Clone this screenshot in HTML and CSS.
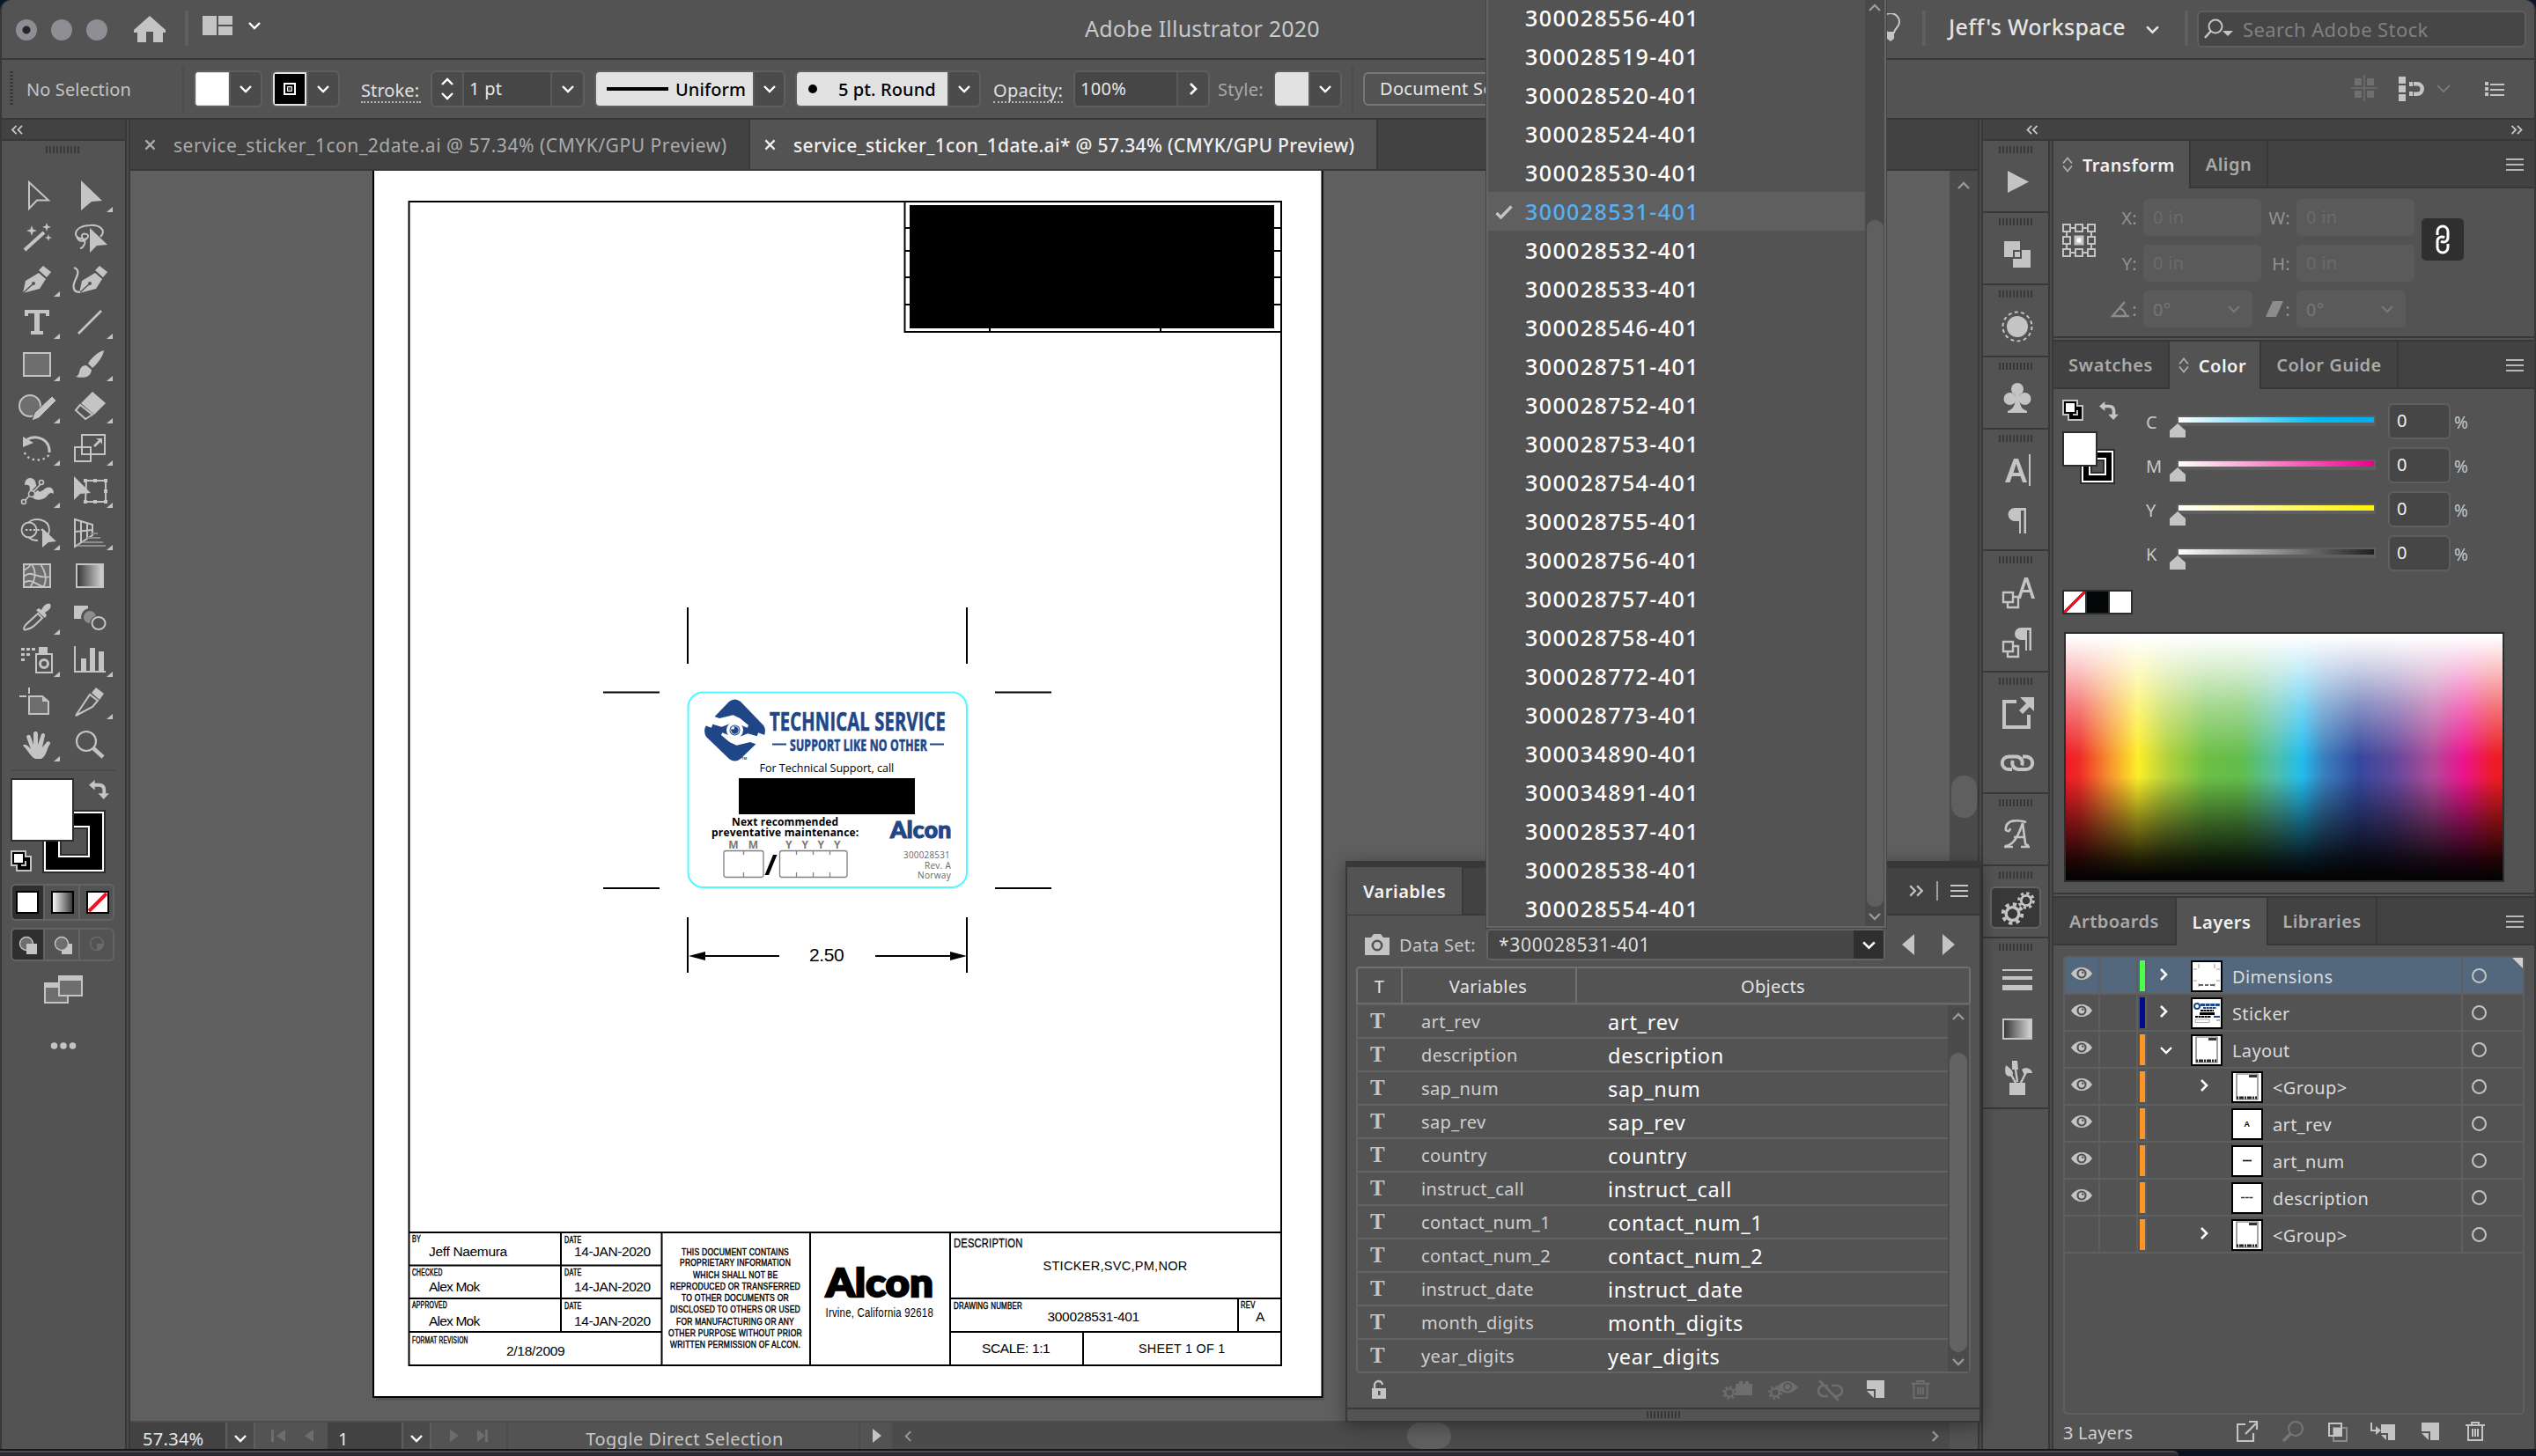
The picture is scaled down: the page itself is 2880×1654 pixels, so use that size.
FILE: index.html
```html
<!DOCTYPE html>
<html lang="en">
<head>
<meta charset="utf-8">
<title>Adobe Illustrator 2020</title>
<link rel="stylesheet" href="styles.css">
</head>
<body>
<svg class="defs" width="0" height="0">
  <symbol id="chev" viewBox="0 0 16 10"><path d="M2 2l6 6 6-6" fill="none" stroke="currentColor" stroke-width="2.4"/></symbol>
  <symbol id="chev-up" viewBox="0 0 16 10"><path d="M2 8l6-6 6 6" fill="none" stroke="currentColor" stroke-width="2.4"/></symbol>
  <symbol id="chev-r" viewBox="0 0 10 16"><path d="M2 2l6 6-6 6" fill="none" stroke="currentColor" stroke-width="2.6"/></symbol>
  <symbol id="chev-l" viewBox="0 0 10 16"><path d="M8 2l-6 6 6 6" fill="none" stroke="currentColor" stroke-width="2.2"/></symbol>
  <symbol id="dbl-l" viewBox="0 0 16 12"><path d="M7 1L2 6l5 5M14 1L9 6l5 5" fill="none" stroke="currentColor" stroke-width="2"/></symbol>
  <symbol id="dbl-r" viewBox="0 0 16 12"><path d="M2 1l5 5-5 5M9 1l5 5-5 5" fill="none" stroke="currentColor" stroke-width="2"/></symbol>
  <symbol id="burger" viewBox="0 0 20 16"><path d="M0 2h20M0 8h20M0 14h20" stroke="currentColor" stroke-width="2"/></symbol>
  <symbol id="updown" viewBox="0 0 12 18"><path d="M1 7.500l5-6 5 6M1 10.500l5 6 5-6" fill="none" stroke="currentColor" stroke-width="1.800"/></symbol>
  <symbol id="cross" viewBox="0 0 14 14"><path d="M1.500 1.500l11 11M12.500 1.500l-11 11" stroke="currentColor" stroke-width="2.400"/></symbol>
  <symbol id="eye" viewBox="0 0 24 14"><path d="M0 7C4 1.500 8 0 12 0s8 1.500 12 7c-4 5.500-8 7-12 7S4 12.500 0 7z" fill="currentColor"/><circle cx="12" cy="7" r="5.600" fill="#535353"/><circle cx="12" cy="7" r="3.400" fill="currentColor"/><circle cx="13.200" cy="5.800" r="1.200" fill="#535353"/></symbol>
  <symbol id="defcol" viewBox="0 0 24 24"><path d="M0 0h18v6h6v18H6v-6H0z" fill="#c4c4c4"/><path d="M8 8h14v14H8z" fill="#000"/><path d="M12 12h6v6h-6z" fill="#c4c4c4"/><path d="M2 2h14v14H2z" fill="#000"/><path d="M4 4h10v10H4z" fill="#fff"/></symbol>
  <symbol id="swap" viewBox="0 0 24 24"><path d="M6 6h6q6 0 6 6v5" fill="none" stroke="#c4c4c4" stroke-width="4"/><path d="M0 6l7-6v12zM11 16h13l-6.500 7z" fill="#c4c4c4"/></symbol>
  <symbol id="trash" viewBox="0 0 22 24"><path d="M0 5h22M7 5V2h8v3M3 6v16h16V6M8 9v9M11 9v9M14 9v9" fill="none" stroke="currentColor" stroke-width="2"/></symbol>
  <symbol id="newdoc" viewBox="0 0 20 20"><path d="M0 0h20v20H10V10H0z" fill="currentColor"/><path d="M0 12h8v8z" fill="currentColor"/></symbol>
  <symbol id="gear" viewBox="0 0 24 24"><circle cx="12" cy="12" r="6.800" fill="none" stroke="currentColor" stroke-width="3.200"/><circle cx="12" cy="12" r="10" fill="none" stroke="currentColor" stroke-width="3.600" stroke-dasharray="3.927 3.927"/></symbol>
  <symbol id="page-thumb" viewBox="0 0 32 32"><path d="M4 1h24v29H4z" fill="none" stroke="#666" stroke-width="1.200"/><path d="M18 2h9v3h-9z" fill="#333"/><path d="M4 28h23" stroke="#222" stroke-width="3" stroke-dasharray="2 1 5 1"/></symbol>
  <linearGradient id="gradgray"><stop offset="0" stop-color="#333"/><stop offset="1" stop-color="#d8d8d8"/></linearGradient>
</svg>
<div class="app">
  <header class="topbar">
    <span class="dot first"></span><span class="dot"></span><span class="dot"></span>
    <svg class="home" width="36" height="30" viewBox="0 0 36 30"><path d="M18 0l18 16v3h-3v11H22V18h-8v12H4V19H0v-3z" fill="#c4c4c4"/></svg>
    <i class="vsep"></i>
    <svg class="arrange" width="34" height="22" viewBox="0 0 34 22"><path d="M0 0h16v22H0zM18 0h16v10H18zM18 12h16v10H18z" fill="#c4c4c4"/></svg>
    <svg class="ch-top" width="16" height="10"><use href="#chev"/></svg>
    <h1>Adobe Illustrator 2020</h1>
    <svg class="bulb" width="24" height="34" viewBox="0 0 24 34"><path d="M8 22c0-4-6-6-6-12a10 10 0 0 1 20 0c0 6-6 8-6 12z" fill="none" stroke="#c4c4c4" stroke-width="2"/><path d="M8 22h8v7l-4 3-4-3z" fill="#c4c4c4"/></svg>
    <i class="vsep"></i>
    <strong class="wsname">Jeff's Workspace</strong>
    <svg class="ch-ws" width="17" height="11"><use href="#chev"/></svg>
    <i class="vsep ws2"></i>
    <div class="search"><svg width="34" height="24" viewBox="0 0 34 24"><circle cx="13" cy="9" r="7.500" fill="none" stroke="#c4c4c4" stroke-width="2"/><path d="M8 14L1 22" stroke="#c4c4c4" stroke-width="2.600"/><path d="M21 14h12l-6 6z" fill="#c4c4c4"/></svg><span>Search Adobe Stock</span></div>
  </header>

  <div class="control">
    <i class="dotgrip"></i>
    <span class="nosel">No Selection</span>
    <i class="thin"></i>
    <div class="box b-fill"><b class="sw white"></b><span class="btn"><svg width="16" height="10"><use href="#chev"/></svg></span></div>
    <div class="box b-stroke"><b class="sw black"><svg width="14" height="14" viewBox="0 0 14 14"><path d="M1 1h12v12H1z" fill="none" stroke="#fff" stroke-width="2"/><path d="M4.500 4.500h5v5h-5z" fill="#535353" stroke="#fff"/></svg></b><span class="btn"><svg width="16" height="10"><use href="#chev"/></svg></span></div>
    <span class="lbl under l-stroke">Stroke:</span>
    <div class="box b-weight"><span class="step"><svg width="16" height="10"><use href="#chev-up"/></svg><svg width="16" height="10"><use href="#chev"/></svg></span><span class="field">1 pt</span><span class="btn"><svg width="16" height="10"><use href="#chev"/></svg></span></div>
    <div class="box b-uni"><span class="light"><i class="line"></i>Uniform</span><span class="btn"><svg width="16" height="10"><use href="#chev"/></svg></span></div>
    <div class="box b-brush"><span class="light"><i class="rnd"></i>5 pt. Round</span><span class="btn"><svg width="16" height="10"><use href="#chev"/></svg></span></div>
    <span class="lbl under l-op">Opacity:</span>
    <div class="box b-op"><span class="field">100%</span><span class="btn"><svg width="10" height="16"><use href="#chev-r"/></svg></span></div>
    <span class="lbl dim l-style">Style:</span>
    <div class="box b-style"><b class="sw gray"></b><span class="btn"><svg width="16" height="10"><use href="#chev"/></svg></span></div>
    <i class="thin t2"></i>
    <div class="docsetup">Document Setup</div>
    <svg class="ctl-icons" width="176" height="32" viewBox="0 0 176 32"><g fill="#6f6f6f"><path d="M4 4h8v8H4zM18 4h8v8h-8zM4 18h8v8H4zM18 18h8v8h-8zM14.200 0h1.600v30h-1.600zM0 14.200h30v1.600H0z"/></g><g fill="#c4c4c4"><path d="M54 2h8v8h-8zM54 12h8v8h-8zM54 22h8v8h-8z"/><path d="M66 8h4v5h-4zM66 19h4v5h-4zM71 8h4a8 8 0 0 1 0 16h-4v-4.500h4a3.500 3.500 0 0 0 0-7h-4z"/></g><path d="M98 12l7 7 7-7" fill="none" stroke="#777" stroke-width="2"/><g fill="#c4c4c4"><path d="M152 8h4v4h-4zM152 14h4v4h-4zM152 20h4v4h-4zM158 10h16v2h-16zM158 16h16v2h-16zM158 22h16v2h-16z"/></g></svg>
  </div>

  <div class="main">
    <aside class="toolbar">
      <div class="strip"><svg width="15" height="11"><use href="#dbl-l"/></svg></div>
      <i class="grip"></i>
      <div class="tools">
        <svg viewBox="0 0 60 48"><path d="M21 9v30l9-9.500h13z" fill="none" stroke="#c4c4c4" stroke-width="2"/></svg>
        <svg viewBox="0 0 60 48"><path d="M20 7v34l12-10 12-1z" fill="#c4c4c4"/><path d="M56 37v6h-7z" fill="#c4c4c4"/></svg>
        <svg viewBox="0 0 60 48"><path d="M16 38l22-20" stroke="#c4c4c4" stroke-width="4"/><path d="M24 10l1.500 4.500L30 16l-4.500 1.500L24 22l-1.500-4.500L18 16l4.500-1.500zM41 7l1.200 3.500L46 12l-3.800 1.300L41 17l-1.200-3.700L36 12l3.800-1.500zM43 20l1 3 3 1-3 1-1 3-1-3-3-1 3-1z" fill="#c4c4c4"/></svg>
        <svg viewBox="0 0 60 48"><path d="M42 23c8-8-2-14-12-13-9 0-16 4-16 10 0 5 12 8 14 3 1-4-8-5-7 0 1 4 6 5 2 10-1 3-4 3-4 3M15 22c2 8 8 6 11 4" fill="none" stroke="#c4c4c4" stroke-width="2"/><path d="M30 13v28l8-8 12-1z" fill="#c4c4c4"/></svg>
        <svg viewBox="0 0 60 48"><path d="M14 39l3-14 15-9 8 7-7 11z" fill="#c4c4c4"/><path d="M14 39l11-10" stroke="#535353" stroke-width="1.500"/><circle cx="26" cy="28" r="2" fill="#535353"/><path d="M32 13l5-5 9 7-5 6z" fill="#c4c4c4"/><path d="M56 37v6h-7z" fill="#c4c4c4"/></svg>
        <svg viewBox="0 0 60 48"><path d="M18 39l3-14 15-9 8 7-7 11z" fill="#c4c4c4"/><path d="M18 39l11-10" stroke="#535353" stroke-width="1.500"/><circle cx="30" cy="28" r="2" fill="#535353"/><path d="M36 13l5-5 9 7-5 6z" fill="#c4c4c4"/><path d="M12 10c6 2 5 7 2 13s-5 15 5 15" fill="none" stroke="#c4c4c4" stroke-width="2.200"/></svg>
        <svg viewBox="0 0 60 48"><path d="M16 10h28v7h-4v-3h-7v20h4v4H23v-4h4V14h-7v3h-4z" fill="#c4c4c4"/><path d="M56 37v6h-7z" fill="#c4c4c4"/></svg>
        <svg viewBox="0 0 60 48"><path d="M17 37l26-26" stroke="#c4c4c4" stroke-width="2.600"/><path d="M56 37v6h-7z" fill="#c4c4c4"/></svg>
        <svg viewBox="0 0 60 48"><path d="M15 11h30v26H15z" fill="#6e6e6e" stroke="#c4c4c4" stroke-width="2"/><path d="M56 37v6h-7z" fill="#c4c4c4"/></svg>
        <svg viewBox="0 0 60 48"><path d="M46 8c-6 1-15 9-18 15l5 5c6-5 12-13 13-20zM26 25c-6 0-7 4-8 8-1 3-2 4-4 5 9 2 17 1 18-8z" fill="#c4c4c4"/><path d="M56 37v6h-7z" fill="#c4c4c4"/></svg>
        <svg viewBox="0 0 60 48"><ellipse cx="22" cy="23" rx="12" ry="12" fill="#6e6e6e" stroke="#c4c4c4" stroke-width="2"/><path d="M24 40l3-9 20-19 5 5-20 20z" fill="#c4c4c4" stroke="#535353"/><path d="M56 37v6h-7z" fill="#c4c4c4"/></svg>
        <svg viewBox="0 0 60 48"><path d="M33 7l15 13-13 13-15-13z" fill="#c4c4c4"/><path d="M19 22l-5 6 11 10 8-5z" fill="none" stroke="#c4c4c4" stroke-width="2"/><path d="M56 37v6h-7z" fill="#c4c4c4"/></svg>
        <svg viewBox="0 0 60 48"><path d="M19 13c12-6 26 1 25 15" fill="none" stroke="#c4c4c4" stroke-width="3"/><path d="M14 10v12l12-5z" fill="#c4c4c4"/><path d="M16 28c3 10 22 12 28 2" fill="none" stroke="#c4c4c4" stroke-width="2.400" stroke-dasharray="2.500 3.500"/><path d="M56 37v6h-7z" fill="#c4c4c4"/></svg>
        <svg viewBox="0 0 60 48"><path d="M21 8h26v22H21zM13 22h18v16H13z" fill="none" stroke="#c4c4c4" stroke-width="2"/><path d="M34 20l6-6-3-2h7v7l-2-3-6 6z" fill="#c4c4c4"/><path d="M56 37v6h-7z" fill="#c4c4c4"/></svg>
        <svg viewBox="0 0 60 48"><path d="M16 17c0-10 10-10 12-4 3 9 2 15 10 9 6-5 11-2 11 5-3-2-5-1-8 3-6 6-17 5-19-4-1-6 2-10-6-9z" fill="#c4c4c4"/><path d="M15 36l20-21" stroke="#535353" stroke-width="4"/><path d="M15 36l20-21" stroke="#c4c4c4" stroke-width="1.800"/><circle cx="15" cy="36" r="2.500" fill="#535353" stroke="#c4c4c4" stroke-width="1.600"/><circle cx="35" cy="14" r="2.500" fill="#535353" stroke="#c4c4c4" stroke-width="1.600"/><circle cx="24" cy="27" r="3.500" fill="#535353" stroke="#c4c4c4" stroke-width="1.600"/><path d="M56 37v6h-7z" fill="#c4c4c4"/></svg>
        <svg viewBox="0 0 60 48"><path d="M26 12h22v24H25z" fill="none" stroke="#c4c4c4" stroke-width="2"/><path d="M46 10h4v4h-4zM46 34h4v4h-4zM46 22h4v4h-4zM34 10h4v4h-4zM34 34h4v4h-4zM23 34h4v4h-4zM23 10h4v4h-4z" fill="#c4c4c4"/><path d="M12 7v27l7-7 12-1z" fill="#c4c4c4"/><path d="M56 37v6h-7z" fill="#c4c4c4"/></svg>
        <svg viewBox="0 0 60 48"><ellipse cx="21" cy="20" rx="8.500" ry="8.500" fill="none" stroke="#c4c4c4" stroke-width="1.800"/><path d="M20 12c6-7 24-5 24 8 0 4-2 7-6 10M20 28c3 3 6 4 11 4" fill="none" stroke="#c4c4c4" stroke-width="1.800"/><path d="M17 20h20" stroke="#c4c4c4" stroke-width="2" stroke-dasharray="2.400 2"/><path d="M36 18v22l7-6 9-1z" fill="#c4c4c4"/><path d="M56 37v6h-7z" fill="#c4c4c4"/></svg>
        <svg viewBox="0 0 60 48"><path d="M13 8l20 6v12L13 39zM13 22l20-2M20 10v24M27 12v18" fill="none" stroke="#c4c4c4" stroke-width="2"/><path d="M31 24h8M27 29h15M22 34h23M16 38h32" stroke="#8d8d8d" stroke-width="2"/><path d="M56 37v6h-7z" fill="#c4c4c4"/></svg>
        <svg viewBox="0 0 60 48"><path d="M15 11h30v26H15z" fill="#6e6e6e" stroke="#c4c4c4" stroke-width="2"/><path d="M24 11c6 9 4 18-2 26M34 11c6 9 8 18 3 26M15 25c9-9 15 4 30 0M15 32c9-6 14 3 24 5M15 18c10-6 6-6 8-7" fill="none" stroke="#c4c4c4" stroke-width="1.800"/></svg>
        <svg viewBox="0 0 60 48"><path d="M15 11h30v26H15z" fill="url(#gradgray)" stroke="#c4c4c4" stroke-width="2"/></svg>
        <svg viewBox="0 0 60 48"><path d="M31 19L17 32c-3 4-2 7 1 5 6-1 8-3 18-13z" fill="none" stroke="#c4c4c4" stroke-width="2"/><path d="M29 15l3-2 3 2c3-6 6-8 10-7 2 4-1 7-6 10l2 3-2 3z" fill="#c4c4c4"/><path d="M56 37v6h-7z" fill="#c4c4c4"/></svg>
        <svg viewBox="0 0 60 48"><path d="M12 10h16v15H12z" fill="#c4c4c4"/><ellipse cx="30" cy="23" rx="8" ry="8" fill="#6e6e6e" stroke="#535353" stroke-width="4"/><ellipse cx="30" cy="23" rx="7" ry="7" fill="#8d8d8d"/><ellipse cx="40" cy="30" rx="10" ry="9" fill="#535353"/><ellipse cx="40" cy="30" rx="7.500" ry="7" fill="none" stroke="#c4c4c4" stroke-width="2"/></svg>
        <svg viewBox="0 0 60 48"><path d="M29 17h18v21H29z" fill="none" stroke="#c4c4c4" stroke-width="2"/><path d="M32 9h10v7H32z" fill="#c4c4c4"/><circle cx="38" cy="28" r="4.500" fill="none" stroke="#c4c4c4" stroke-width="3"/><path d="M12 10h4v3h-4zM18 10h4v3h-4zM24 10h4v3h-4zM12 16h4v3h-4zM18 16h4v3h-4zM12 22h4v3h-4z" fill="#c4c4c4"/><path d="M56 37v6h-7z" fill="#c4c4c4"/></svg>
        <svg viewBox="0 0 60 48"><path d="M12 8h2v28h34v2H12z" fill="#c4c4c4"/><path d="M20 22h6v14h-6zM30 10h6v26h-6zM40 14h6v22h-6z" fill="#c4c4c4"/><path d="M56 37v6h-7z" fill="#c4c4c4"/></svg>
        <svg viewBox="0 0 60 48"><path d="M21 17h15l7 6v14H21z" fill="#6e6e6e" stroke="#c4c4c4" stroke-width="2"/><path d="M10 17h8M21 7v7" stroke="#c4c4c4" stroke-width="2"/><path d="M36 16v7h8z" fill="#c4c4c4"/></svg>
        <svg viewBox="0 0 60 48"><path d="M14 39l16-24 9 7-6 7z" fill="none" stroke="#c4c4c4" stroke-width="2"/><path d="M32 13l5-6 9 7-5 7z" fill="#c4c4c4"/><path d="M56 37v6h-7z" fill="#c4c4c4"/></svg>
        <svg viewBox="0 0 60 48"><path d="M28 40c-5-2-9-11-14-15 2-3 6 0 9 4L18 15c1-3 4-3 5 0l3 9 0-13c1-3 4-3 5 0v13l4-12c2-2 4-1 4 1l-3 14 5-6c2-2 5 0 4 2-4 5-4 14-10 17z" fill="#c4c4c4"/><path d="M56 37v6h-7z" fill="#c4c4c4"/></svg>
        <svg viewBox="0 0 60 48"><circle cx="26" cy="20" r="11" fill="none" stroke="#c4c4c4" stroke-width="2.200"/><path d="M34 28l11 10" stroke="#c4c4c4" stroke-width="4.500"/></svg>
      </div>
      <svg class="tool-foot" width="140" height="330" viewBox="2 872 140 330">
        <path d="M12 875h120" stroke="#4b4b4b" stroke-width="2"/>
        <path d="M48 920h72v72H48z" fill="#2d2d2d"/><path d="M50 922h68v68H50z" fill="#fff"/><path d="M52 924h64v64H52z"/><path d="M66 938h36v36H66z" fill="#fff"/><path d="M68 940h32v32H68z" fill="#2d2d2d"/><path d="M70 942h28v28H70z" fill="#535353"/>
        <path d="M12 884h72v72H12z" fill="#2d2d2d"/><path d="M14 886h68v68H14z" fill="#fff"/>
        <use href="#swap" x="101" y="886" width="23" height="23"/><use href="#defcol" x="12" y="966" width="24" height="24"/>
        <g fill="none" stroke="#636363" stroke-width="2"><path d="M14 1006h35v38H14zM14 1056h35v34H14z" fill="#2f2f2f" stroke="none"/><rect x="13" y="1005" width="116" height="40" rx="5"/><rect x="13" y="1055" width="116" height="36" rx="5"/><path d="M50 1005v40M90 1005v40M50 1055v36M90 1055v36"/></g>
        <path d="M19 1013h24v24H19z" fill="#fff" stroke="#000" stroke-width="2"/>
        <linearGradient id="wb"><stop offset="0" stop-color="#fff"/><stop offset="1" stop-color="#333"/></linearGradient>
        <path d="M59 1013h24v24H59z" fill="url(#wb)" stroke="#000" stroke-width="2"/>
        <path d="M99 1013h24v24H99z" fill="#fff" stroke="#000" stroke-width="2"/><path d="M101 1035l20-20" stroke="#fc0d1b" stroke-width="4"/>
        <circle cx="30" cy="1072" r="7.500" fill="#6e6e6e" stroke="#c4c4c4" stroke-width="1.400"/><path d="M30 1072h12v12H30z" fill="#c4c4c4"/>
        <path d="M70 1072h12v12H70z" fill="#c4c4c4"/><circle cx="70" cy="1072" r="7.500" fill="#6e6e6e" stroke="#c4c4c4" stroke-width="1.400"/>
        <circle cx="110" cy="1072" r="7.500" fill="none" stroke="#6b6b6b" stroke-width="1.400"/><path d="M110 1072h8q-1 7-8 8z" fill="#6b6b6b"/>
        <path d="M51 1117h26v22H51z" fill="#6e6e6e" stroke="#c4c4c4" stroke-width="2"/><path d="M50 1116h28v6H50z" fill="#c4c4c4"/><path d="M67 1109h26v22H67z" fill="#6e6e6e" stroke="#c4c4c4" stroke-width="2"/><path d="M66 1108h28v6H66z" fill="#c4c4c4"/>
        <g fill="#c4c4c4"><circle cx="61.500" cy="1188" r="3.800"/><circle cx="72" cy="1188" r="3.800"/><circle cx="82.500" cy="1188" r="3.800"/></g>
      </svg>
    </aside>
    <i class="gutter"></i>

    <section class="doc">
      <nav class="doctabs">
        <div class="dtab"><svg width="13" height="13"><use href="#cross"/></svg><span>service_sticker_1con_2date.ai @ 57.34% (CMYK/GPU Preview)</span></div>
        <div class="dtab on"><svg width="13" height="13"><use href="#cross"/></svg><span>service_sticker_1con_1date.ai* @ 57.34% (CMYK/GPU Preview)</span></div>
      </nav>
      <div class="work">
        <svg class="canvas" width="2066" height="1420" viewBox="148 194 2066 1420" font-family="Liberation Sans, Arial, sans-serif">
          <path d="M427 190h1077v1401H427z" fill="#4d4d4d" opacity=".6"/>
          <path d="M424 190h1077.500v1397H424z" fill="#fff" stroke="#000" stroke-width="2"/>
          <g fill="none" stroke="#000" stroke-width="2">
            <path d="M464.500 229H1455v1322H464.500zM464.500 1400H1455M464.500 1437.500h287M464.500 1475h287M464.500 1513h287M637 1400v113M751.500 1400v151M920 1400v151M1079 1400v151M1079 1475H1455M1079 1513H1455M1406 1475v38M1230 1513v38"/>
            <path d="M1027.500 229v148H1455M1027 259h6M1027 285h6M1027 315h6M1027 346h6M1447 259h8M1447 285h8M1447 315h8M1447 346h8M1124 373v4M1318 373v4"/>
            <path d="M781 690v64M1098 690v64M781 1042v63M1098 1042v63M685 786.500h64M685 1009h64M1130 786.500h64M1130 1009h64M798 1086h87M994 1086h87"/>
          </g>
          <path d="M1033 233h414v140h-414zM839 884h200v41H839zM782 1086l19-5v10zM1098 1086l-19-5v10z"/>
          <text x="919" y="1092" font-size="21" textLength="40">2.50</text>
          <rect x="781.500" y="786.500" width="316.500" height="221.500" rx="17" fill="none" stroke="#4cfbfd" stroke-width="2"/>
          <g fill="#1f4788">
            <path d="M828 797q6.500-5 13 0l26 27q4 6 0 13l-26 25q-6.500 5-13 0l-26-25q-4-7 0-13z"/>
            <path id="hand" d="M806 812l11 4 15.500-3.700 8 3.700 9.600 8-1.500 2.700-8.200-3.400-9-2-5.400 2-6.400 2.400-10.300-3-1.400 4-6.500-2.400-5-3.500z" fill="#fff"/>
            <use href="#hand" transform="rotate(180 834.500 829.500)"/>
            <circle cx="834.500" cy="829.500" r="9.500" fill="#fff"/><circle cx="834.500" cy="829.500" r="6"/><circle cx="834.500" cy="829.500" r="5" fill="#fff"/><circle cx="834.500" cy="829.500" r="4.200"/><circle cx="832.500" cy="827" r="1.500" fill="#fff"/>
          </g>
          <g fill="#1f4788" font-family="Open Sans, Noto Sans, sans-serif" font-weight="700">
            <g stroke="#1f4788" stroke-width=".7"><text x="874" y="830" font-size="29" textLength="200" lengthAdjust="spacingAndGlyphs">TECHNICAL SERVICE</text>
            <text x="897" y="852.500" font-size="18.500" textLength="156" lengthAdjust="spacingAndGlyphs">SUPPORT LIKE NO OTHER</text></g>
            <path d="M877 844.500h16v2h-16zM1056 844.500h16v2h-16z"/>
            <text x="842" y="863" font-size="4">TM</text>
          </g>
          <g font-family="Open Sans, Noto Sans, sans-serif">
            <text x="862.500" y="877" font-size="12.600" textLength="153">For Technical Support, call</text>
            <g font-weight="700" font-size="12"><text x="831" y="938" textLength="121.500">Next recommended</text><text x="808" y="950" textLength="167.500">preventative maintenance:</text>
            <g fill="#777" text-anchor="middle"><text x="833" y="964">M</text><text x="855.500" y="964">M</text><text x="896" y="964">Y</text><text x="914.500" y="964">Y</text><text x="932.500" y="964">Y</text><text x="951" y="964">Y</text></g></g>
            <g font-size="11" fill="#666"><text x="1026" y="975" textLength="53" lengthAdjust="spacingAndGlyphs">300028531</text><text x="1050" y="987" textLength="30" lengthAdjust="spacingAndGlyphs">Rev. A</text><text x="1042" y="998" textLength="38" lengthAdjust="spacingAndGlyphs">Norway</text></g>
          </g>
          <path d="M878 971h4.500l-9.500 23h-4.500z"/>
          <g fill="none" stroke="#808080" stroke-width="1.300"><rect x="822" y="966.500" width="45" height="30" rx="2.500"/><rect x="885.500" y="966.500" width="76.500" height="30" rx="2.500"/><path d="M844.500 966v5M844.500 997v-6M904.500 966v5M904.500 997v-6M923.500 966v5M923.500 997v-6M942.500 966v5M942.500 997v-6"/></g>
          <g font-family="Lato, sans-serif" font-weight="900"><text x="1011" y="952" font-size="26" fill="#1f4788" stroke="#1f4788" stroke-width="1.200" textLength="69.500" lengthAdjust="spacingAndGlyphs">Alcon</text><text x="938" y="1472.500" font-size="43" stroke="#000" stroke-width="2.400" textLength="122" lengthAdjust="spacingAndGlyphs">Alcon</text></g>
          <g font-size="10" stroke="#000" stroke-width=".4">
            <text x="468" y="1411" textLength="10" lengthAdjust="spacingAndGlyphs">BY</text><text x="468" y="1449" textLength="34.500" lengthAdjust="spacingAndGlyphs">CHECKED</text><text x="468" y="1486" textLength="40" lengthAdjust="spacingAndGlyphs">APPROVED</text><text x="468" y="1526" textLength="63.500" lengthAdjust="spacingAndGlyphs">FORMAT REVISION</text>
            <text x="641" y="1411.500" textLength="19.500" lengthAdjust="spacingAndGlyphs">DATE</text><text x="641" y="1448.500" textLength="19.500" lengthAdjust="spacingAndGlyphs">DATE</text><text x="641" y="1487" textLength="19.500" lengthAdjust="spacingAndGlyphs">DATE</text>
            <text x="1083" y="1487" textLength="78" lengthAdjust="spacingAndGlyphs">DRAWING NUMBER</text><text x="1409" y="1486" textLength="16.500" lengthAdjust="spacingAndGlyphs">REV</text>
          </g>
          <g font-size="15.500">
            <text x="487" y="1427" textLength="89.500">Jeff Naemura</text><text x="487" y="1467" textLength="58.500">Alex Mok</text><text x="487" y="1506" textLength="58.500">Alex Mok</text>
            <text x="652" y="1427" textLength="87.500">14-JAN-2020</text><text x="652" y="1467" textLength="87.500">14-JAN-2020</text><text x="652" y="1506" textLength="87.500">14-JAN-2020</text>
            <text x="575" y="1540" textLength="67">2/18/2009</text><text x="937.500" y="1496" textLength="122.500" lengthAdjust="spacingAndGlyphs">Irvine, California 92618</text>
            <text x="1083" y="1417" textLength="78.500" lengthAdjust="spacingAndGlyphs" stroke="#000" stroke-width=".3">DESCRIPTION</text><text x="1184.500" y="1443" textLength="164" lengthAdjust="spacingAndGlyphs">STICKER,SVC,PM,NOR</text>
            <text x="1189.500" y="1501" textLength="105">300028531-401</text><text x="1426" y="1501">A</text><text x="1115" y="1537" textLength="78">SCALE: 1:1</text><text x="1293" y="1537" textLength="98.500" lengthAdjust="spacingAndGlyphs">SHEET 1 OF 1</text>
          </g>
          <g font-size="11.500" stroke="#000" stroke-width=".45">
            <text x="774" y="1425.500" textLength="122" lengthAdjust="spacingAndGlyphs">THIS DOCUMENT CONTAINS</text><text x="772" y="1438" textLength="126" lengthAdjust="spacingAndGlyphs">PROPRIETARY INFORMATION</text><text x="787" y="1451.500" textLength="96.500" lengthAdjust="spacingAndGlyphs">WHICH SHALL NOT BE</text><text x="761" y="1465" textLength="148" lengthAdjust="spacingAndGlyphs">REPRODUCED OR TRANSFERRED</text><text x="774" y="1478" textLength="122" lengthAdjust="spacingAndGlyphs">TO OTHER DOCUMENTS OR</text><text x="761" y="1491" textLength="148" lengthAdjust="spacingAndGlyphs">DISCLOSED TO OTHERS OR USED</text><text x="768" y="1505" textLength="134" lengthAdjust="spacingAndGlyphs">FOR MANUFACTURING OR ANY</text><text x="759" y="1518" textLength="152" lengthAdjust="spacingAndGlyphs">OTHER PURPOSE WITHOUT PRIOR</text><text x="761" y="1531" textLength="148" lengthAdjust="spacingAndGlyphs">WRITTEN PERMISSION OF ALCON.</text>
          </g>
        </svg>
        <div class="vscroll"><svg width="16" height="10"><use href="#chev-up"/></svg><b></b></div>
      </div>
      <footer class="status">
        <span class="zoomval">57.34%</span><span class="sbtn"><svg width="16" height="10"><use href="#chev"/></svg></span>
        <svg class="navl" width="82" height="20" viewBox="0 0 82 20"><path d="M18 3h3v14h-3zM34 3v14l-10-7zM66 3v14l-10-7z" fill="#6d6d6d"/></svg>
        <span class="pageval">1</span><span class="sbtn"><svg width="16" height="10"><use href="#chev"/></svg></span>
        <svg class="navr" width="82" height="20" viewBox="0 0 82 20"><path d="M20 3v14l10-7zM51 3v14l9-7zM60 3h3v14h-3z" fill="#6d6d6d"/></svg>
        <span class="toggle">Toggle Direct Selection</span>
        <svg class="play2" width="36" height="20" viewBox="0 0 36 20"><path d="M14 2v16l10-8z" fill="#c4c4c4"/></svg>
        <div class="hscroll"><svg width="9" height="15"><use href="#chev-l"/></svg><b></b><svg width="9" height="15"><use href="#chev-r"/></svg></div>
      </footer>
    </section>
    <i class="gutter"></i>

    <section class="dock">
      <div class="dockhead"><svg class="dl" width="16" height="11"><use href="#dbl-l"/></svg><svg width="16" height="11"><use href="#dbl-r"/></svg></div>
      <div class="dockbody">
        <div class="icons">
          <div class="grp"><i class="grip"></i><svg viewBox="0 0 74 56"><path d="M28 15v25l24-12.500z" fill="#c4c4c4"/></svg></div>
          <div class="grp"><i class="grip"></i><svg viewBox="0 0 74 56"><path d="M24 13h18v10h-8v8H24z" fill="#c4c4c4"/><path d="M44 23h10v20H34V33h10z" fill="#c4c4c4"/><path d="M36 25h6v6h-6z" fill="#c4c4c4"/></svg></div>
          <div class="grp"><i class="grip"></i><svg viewBox="0 0 74 56"><circle cx="39" cy="28" r="12" fill="#c4c4c4"/><circle cx="39" cy="28" r="16.500" fill="none" stroke="#c4c4c4" stroke-width="2" stroke-dasharray="4 3.400"/></svg></div>
          <div class="grp"><i class="grip"></i><svg viewBox="0 0 74 56"><g fill="#c4c4c4"><circle cx="39" cy="17" r="7"/><circle cx="30.500" cy="28" r="7"/><circle cx="47.500" cy="28" r="7"/><path d="M36 22h6l-1 6q1 12 9 14v2H28v-2q8-2 9-14z"/></g></svg></div>
          <div class="grp"><i class="grip"></i><svg viewBox="0 0 74 56"><path d="M25 41l10-27h5l10 27h-5l-2.500-7H33l-2.500 7zM34.500 30h6.500l-3.300-10zM52 9h2v36h-2z" fill="#c4c4c4"/></svg><svg viewBox="0 0 74 56"><path d="M49 14v29h-2.500V17H43v26h-2V29h-5a7.500 7.500 0 0 1 0-15z" fill="#c4c4c4"/></svg></div>
          <div class="grp"><i class="grip"></i><svg viewBox="0 0 74 56"><path d="M39 35l8-24h4l8 24h-4l-2-7h-8l-2 7zM46 25h6l-3-9z" fill="#c4c4c4"/><path d="M23 28h11v11H23zM34 33h6v12H28v-6" fill="none" stroke="#c4c4c4" stroke-width="2.400"/></svg><svg viewBox="0 0 74 56"><path d="M55 12v26h-2.500V15H50v23h-2V26h-5a7 7 0 0 1 0-14z" fill="#c4c4c4"/><path d="M23 28h11v11H23zM34 33h6v12H28v-6" fill="none" stroke="#c4c4c4" stroke-width="2.400"/></svg></div>
          <div class="grp"><i class="grip"></i><svg viewBox="0 0 74 56"><path d="M38 14H24v29h28V29" fill="none" stroke="#c4c4c4" stroke-width="4"/><path d="M42 9h16v16l-5-5-8 8-4-4 8-8z" fill="#c4c4c4"/></svg><svg viewBox="0 0 74 56"><g fill="none" stroke="#c4c4c4" stroke-width="4"><path d="M33 35h-4a7 7 0 0 1 0-14.500h9a7 7 0 0 1 6 10"/><path d="M45 20.500h4a7 7 0 0 1 0 14.500h-9a7 7 0 0 1-6-10"/></g></svg></div>
          <div class="grp"><i class="grip"></i><svg viewBox="0 0 74 56"><path d="M49 13q-8-3-17-1-7 3-6 10 4 3 5-2" fill="none" stroke="#c4c4c4" stroke-width="2.600"/><path d="M45 14Q38 35 31 38q-2 2-6 2M45 14l3 23q1 3 4 2M35 30h12M24 41h10M43 41h10" fill="none" stroke="#c4c4c4" stroke-width="2.600"/></svg></div>
          <div class="grp"><i class="grip"></i><svg viewBox="0 0 74 56"><rect x="9" y="5" width="56" height="46" rx="5" fill="#383838" stroke="#636363" stroke-width="2"/><use href="#gear" x="20.500" y="22" width="26" height="26" color="#c4c4c4"/><use href="#gear" x="39" y="10" width="20" height="20" color="#c4c4c4"/></svg></div>
          <div class="grp"><i class="grip"></i><svg viewBox="0 0 74 56"><path d="M22 16h34v2H22zM22 24h34v4H22zM22 34h34v6H22z" fill="#c4c4c4"/></svg><svg viewBox="0 0 74 56"><path d="M23 17h32v22H23z" fill="url(#gradgray)" stroke="#c4c4c4" stroke-width="2"/></svg><svg viewBox="0 0 74 56"><g fill="#c4c4c4"><path d="M30 33h18v14H30zM26 13c8 6 9 8 7 12-8 3-9-5-7-12zM33 8h6l1 10h-7zM44 18c4-4 12-1 12 4l-6 0-3 2z"/><path d="M32 24l5 9M37 18l2 14M49 21l-6 12" stroke="#c4c4c4" stroke-width="2.400"/></g></svg></div>
        </div>
        <i class="gutter"></i>
        <div class="panels">
          <section class="panel transform">
            <nav class="ptabs"><span class="pt on t1"><svg width="12" height="18"><use href="#updown"/></svg>Transform</span><span class="pt t2">Align</span><svg class="bg" width="20" height="16"><use href="#burger"/></svg></nav>
            <div class="tbody">
              <svg class="refpt" width="40" height="40" viewBox="0 0 40 40"><path d="M6 6h28v28H6z" fill="none" stroke="#c4c4c4" stroke-width="2"/><g fill="#535353" stroke="#c4c4c4" stroke-width="2"><path d="M2 2h8v8H2zM16 2h8v8h-8zM30 2h8v8h-8zM2 16h8v8H2zM30 16h8v8h-8zM2 30h8v8H2zM16 30h8v8h-8zM30 30h8v8h-8z"/><path d="M16 16h8v8h-8z" fill="#fff" stroke-width="3"/></g></svg>
              <div class="tgrid">
                <label>X:</label><span class="tf">0 in</span><label>W:</label><span class="tf">0 in</span>
                <label>Y:</label><span class="tf">0 in</span><label>H:</label><span class="tf">0 in</span>
                <label><svg width="22" height="19" viewBox="0 0 22 19"><path d="M16 1L2 17h19M10 8q7 3 7 9" fill="none" stroke="#8c8c8c" stroke-width="2.400"/></svg>:</label><span class="tf short">0°<svg width="16" height="10"><use href="#chev"/></svg></span><label><svg width="20" height="19" viewBox="0 0 20 19"><path d="M8 0h12l-8 18H0z" fill="#8c8c8c"/></svg>:</label><span class="tf short">0°<svg width="16" height="10"><use href="#chev"/></svg></span>
              </div>
              <div class="linkbtn"><svg width="20" height="34" viewBox="0 0 20 34"><g fill="none" stroke="#fff" stroke-width="3"><path d="M4 12V8a6 6 0 0 1 12 0v7a5 5 0 0 1-8 4"/><path d="M16 22v4a6 6 0 0 1-12 0v-7a5 5 0 0 1 8-4"/></g></svg></div>
            </div>
          </section>
          <section class="panel color">
            <nav class="ptabs"><span class="pt c1">Swatches</span><span class="pt on c2"><svg width="12" height="18"><use href="#updown"/></svg>Color</span><span class="pt c3">Color Guide</span><svg class="bg" width="20" height="16"><use href="#burger"/></svg></nav>
            <div class="cbody">
              <svg class="fs" width="80" height="110" viewBox="2342 454 80 110"><use href="#defcol" x="2342" y="454" width="24" height="24"/><use href="#swap" x="2384" y="456" width="22" height="22"/><path d="M2362 510h40v40h-40z" fill="#2d2d2d"/><path d="M2364 512h36v36h-36z" fill="#fff"/><path d="M2366 514h32v32h-32z"/><path d="M2372 520h20v20h-20z" fill="#fff"/><path d="M2374 522h16v16h-16z" fill="#2d2d2d"/><path d="M2376 524h12v12h-12z" fill="#535353"/><path d="M2342 490h40v40h-40z" fill="#2d2d2d"/><path d="M2344 492h36v36h-36z" fill="#fff"/></svg>
              <div class="sliders">
                <div class="sl"><label>C</label><span class="track cyan"><i></i></span><b>0</b><em>%</em></div>
                <div class="sl"><label>M</label><span class="track magenta"><i></i></span><b>0</b><em>%</em></div>
                <div class="sl"><label>Y</label><span class="track yellow"><i></i></span><b>0</b><em>%</em></div>
                <div class="sl"><label>K</label><span class="track key"><i></i></span><b>0</b><em>%</em></div>
              </div>
            </div>
            <div class="chips"><i class="none"></i><i class="blk"></i><i class="wht"></i></div>
            <div class="spectrum"></div>
          </section>
          <section class="panel layers">
            <nav class="ptabs"><span class="pt l1">Artboards</span><span class="pt on l2">Layers</span><span class="pt l3">Libraries</span><svg class="bg" width="20" height="16"><use href="#burger"/></svg></nav>
            <div class="list">
              <div class="row sel"><span class="e"><svg width="24" height="14"><use href="#eye"/></svg></span><span class="lk"></span><i class="green"></i><span class="n"><svg class="ar" width="10" height="16"><use href="#chev-r"/></svg><svg class="th" viewBox="0 0 32 32"><path d="M7 2v5M25 2v5M1 8h4M27 8h4M1 21h4M27 21h4M7 24v4M25 24v4" stroke="#999"/><path d="M7 26h5M20 26h5M14 26h4" stroke="#333" stroke-width="1.400"/></svg>Dimensions</span><span class="tg"><u></u></span></div>
              <div class="row"><span class="e"><svg width="24" height="14"><use href="#eye"/></svg></span><span class="lk"></span><i class="navy"></i><span class="n"><svg class="ar" width="10" height="16"><use href="#chev-r"/></svg><svg class="th" viewBox="0 0 32 32"><circle cx="5" cy="8" r="3" fill="none" stroke="#1f4788" stroke-width="2"/><path d="M9 6.500h22" stroke="#1f4788" stroke-width="3" stroke-dasharray="5 .6"/><path d="M12 10h15" stroke="#1f4788" stroke-width="1.800" stroke-dasharray="3 .6"/><path d="M9 13h15M3 20h18" stroke="#000" stroke-width="1.800" stroke-dasharray="3 .5"/><path d="M8 16.500h17" stroke="#000" stroke-width="3"/><path d="M24 20h7" stroke="#1f4788" stroke-width="2"/><path d="M3 23h16v3.500H3z" fill="none" stroke="#999" stroke-width=".8"/><path d="M27 24h4" stroke="#777"/></svg>Sticker</span><span class="tg"><u></u></span></div>
              <div class="row"><span class="e"><svg width="24" height="14"><use href="#eye"/></svg></span><span class="lk"></span><i></i><span class="n"><svg class="ar dn" width="16" height="10"><use href="#chev"/></svg><svg class="th" viewBox="0 0 32 32"><use href="#page-thumb"/></svg>Layout</span><span class="tg"><u></u></span></div>
              <div class="row sub"><span class="e"><svg width="24" height="14"><use href="#eye"/></svg></span><span class="lk"></span><i></i><span class="n"><svg class="ar" width="10" height="16"><use href="#chev-r"/></svg><svg class="th" viewBox="0 0 32 32"><use href="#page-thumb"/></svg>&lt;Group&gt;</span><span class="tg"><u></u></span></div>
              <div class="row sub"><span class="e"><svg width="24" height="14"><use href="#eye"/></svg></span><span class="lk"></span><i></i><span class="n"><svg class="ar" width="10" height="16"></svg><svg class="th" viewBox="0 0 32 32"><text x="16" y="19" font-size="9" font-weight="700" text-anchor="middle" font-family="Liberation Sans">A</text></svg>art_rev</span><span class="tg"><u></u></span></div>
              <div class="row sub"><span class="e"><svg width="24" height="14"><use href="#eye"/></svg></span><span class="lk"></span><i></i><span class="n"><svg class="ar" width="10" height="16"></svg><svg class="th" viewBox="0 0 32 32"><path d="M11 15.500h10" stroke="#111" stroke-width="1.600"/></svg>art_num</span><span class="tg"><u></u></span></div>
              <div class="row sub"><span class="e"><svg width="24" height="14"><use href="#eye"/></svg></span><span class="lk"></span><i></i><span class="n"><svg class="ar" width="10" height="16"></svg><svg class="th" viewBox="0 0 32 32"><path d="M9 15.500h14" stroke="#333" stroke-width="1.400" stroke-dasharray="4 .7"/></svg>description</span><span class="tg"><u></u></span></div>
              <div class="row sub"><span class="e"></span><span class="lk"></span><i></i><span class="n"><svg class="ar" width="10" height="16"><use href="#chev-r"/></svg><svg class="th" viewBox="0 0 32 32"><use href="#page-thumb"/></svg>&lt;Group&gt;</span><span class="tg"><u></u></span></div>
            </div>
            <div class="lfoot"><span>3 Layers</span><svg width="284" height="26" viewBox="2540 1613 284 26"><g color="#c4c4c4"><path d="M2550 1618h-9v19h18v-9" fill="none" stroke="#c4c4c4" stroke-width="2.200"/><path d="M2550 1629l12-12M2554 1615h9v9" fill="none" stroke="#c4c4c4" stroke-width="2.200"/><circle cx="2607" cy="1623" r="8" fill="none" stroke="#777" stroke-width="2"/><path d="M2601 1629l-8 8" stroke="#777" stroke-width="3.500"/><path d="M2650 1622h15v15h-15z" fill="none" stroke="#8a8a8a" stroke-width="2"/><path d="M2645 1617h14v14h-14z" fill="none" stroke="#c4c4c4" stroke-width="2"/><path d="M2650 1622h9v9h-9z" fill="#c4c4c4"/><path d="M2693 1616v9h6" fill="none" stroke="#c4c4c4" stroke-width="2"/><path d="M2698 1620l6 5-6 5z" fill="#c4c4c4"/><path d="M2704 1618h16v18h-8v-8h-8zM2704 1630h6v6z" fill="#c4c4c4"/><use href="#newdoc" x="2750" y="1616" width="20" height="20"/><use href="#trash" x="2800" y="1614" width="22" height="24"/></g></svg></div>
          </section>
        </div>
      </div>
    </section>
  </div>
  <div class="bottomedge"><i></i></div>

  <section class="varpanel">
    <div class="vtabs"><span>Variables</span><svg class="vd" width="18" height="14"><use href="#dbl-r"/></svg><i></i><svg class="vb" width="20" height="16"><use href="#burger"/></svg></div>
    <div class="dset"><svg width="28" height="24" viewBox="0 0 28 24"><path d="M0 4h7l3-4h8l3 4h7v20H0z" fill="#c4c4c4"/><circle cx="14" cy="13" r="5.200" fill="none" stroke="#535353" stroke-width="2.600"/></svg><label>Data Set:</label><div class="dfield"><span>*300028531-401</span><b><svg width="17" height="11"><use href="#chev"/></svg></b></div><svg class="arrows" width="60" height="26" viewBox="0 0 60 26"><path d="M14 1v24L0 13zM46 1v24l14-12z" fill="#c4c4c4"/></svg></div>
    <div class="vhead"><span>T</span><span>Variables</span><span>Objects</span></div>
    <div class="vbody">
      <div class="vrows">
        <div><b>T</b><span>art_rev</span><em>art_rev</em></div>
        <div><b>T</b><span>description</span><em>description</em></div>
        <div><b>T</b><span>sap_num</span><em>sap_num</em></div>
        <div><b>T</b><span>sap_rev</span><em>sap_rev</em></div>
        <div><b>T</b><span>country</span><em>country</em></div>
        <div><b>T</b><span>instruct_call</span><em>instruct_call</em></div>
        <div><b>T</b><span>contact_num_1</span><em>contact_num_1</em></div>
        <div><b>T</b><span>contact_num_2</span><em>contact_num_2</em></div>
        <div><b>T</b><span>instruct_date</span><em>instruct_date</em></div>
        <div><b>T</b><span>month_digits</span><em>month_digits</em></div>
        <div><b>T</b><span>year_digits</span><em>year_digits</em></div>
      </div>
      <div class="vbar"><svg width="16" height="10"><use href="#chev-up"/></svg><b></b><svg width="16" height="10"><use href="#chev"/></svg></div>
    </div>
    <svg class="vfoot" width="718" height="39" viewBox="1530 1560 718 39"><path d="M1558 1577h16v12h-16z" fill="#c4c4c4"/><path d="M1561 1577v-3a4.500 4.500 0 0 1 9-1" fill="none" stroke="#c4c4c4" stroke-width="2.400"/><path d="M1565 1580h2.500v5h-2.500z" fill="#535353"/><g color="#6e6e6e" fill="#6e6e6e"><use href="#gear" x="1956" y="1574" width="16" height="16"/><path d="M1971 1572h4v-3h4v3h3v-3h4v3h4v13h-19z"/><use href="#gear" x="2008" y="1574" width="16" height="16"/><path d="M2018 1576q12-14 24 0-12 13-24 0z"/><circle cx="2030" cy="1575.500" r="4" fill="none" stroke="#535353" stroke-width="1.600"/><g fill="none" stroke="#6e6e6e" stroke-width="2.600"><path d="M2076 1586h-5a6 6 0 0 1 0-12h5M2080 1574h6a6 6 0 0 1 0 12h-3M2066 1568l22 23"/></g><use href="#newdoc" x="2120" y="1568" width="20" height="20" color="#c4c4c4"/><use href="#trash" x="2170" y="1567" width="22" height="23"/></g></svg>
    <div class="vgrip"><i class="grip"></i></div>
  </section>

  <div class="menu">
    <ul>
      <li>300028556-401</li><li>300028519-401</li><li>300028520-401</li><li>300028524-401</li><li>300028530-401</li>
      <li class="cur"><svg width="20" height="16" viewBox="0 0 20 16"><path d="M1.500 9l5 5L18.500 1.500" fill="none" stroke="#c4c4c4" stroke-width="3.400"/></svg>300028531-401</li>
      <li>300028532-401</li><li>300028533-401</li><li>300028546-401</li><li>300028751-401</li><li>300028752-401</li><li>300028753-401</li><li>300028754-401</li><li>300028755-401</li><li>300028756-401</li><li>300028757-401</li><li>300028758-401</li><li>300028772-401</li><li>300028773-401</li><li>300034890-401</li><li>300034891-401</li><li>300028537-401</li><li>300028538-401</li><li>300028554-401</li>
    </ul>
    <div class="mbar"><svg width="16" height="10"><use href="#chev-up"/></svg><b></b><svg width="16" height="10"><use href="#chev"/></svg></div>
  </div>
</div>
</body>
</html>
```
FILE: styles.css
```css
* { box-sizing: border-box; }
html, body { margin: 0; padding: 0; }
body { background: #0a1626; width: 2880px; height: 1654px; overflow: hidden; font-family: "Noto Sans", "Open Sans", sans-serif; font-size: 20px; letter-spacing: .3px; color: #d6d6d6; white-space: nowrap; }
svg { display: block; flex: none; }
i, em { font-style: normal; }
.defs { position: absolute; }
.app { position: relative; width: 2880px; height: 1654px; display: flex; flex-direction: column; }
.gutter { flex: none; width: 6px; background: #4b4b4b; border: solid #383838; border-width: 0 2px; }
.grip { display: block; width: 38px; height: 8px; background: repeating-linear-gradient(90deg, #383838 0 2px, transparent 2px 4px); }

/* title bar */
.topbar { height: 68px; flex: none; background: #535353; border: 2px solid #383838; border-top: 0; border-radius: 12px 12px 0 0; display: flex; align-items: flex-start; }
.dot { width: 24px; height: 24px; border-radius: 50%; background: #8e8d94; margin: 22px 0 0 16px; }
.dot.first { background: radial-gradient(circle, #252528 0 4px, #8e8d94 5px); }
.home { margin: 18px 0 0 30px; }
.vsep { width: 4px; height: 40px; background: #5f5f5f; margin: 12px 0 0 22px; }
.arrange { margin: 18px 0 0 16px; }
.ch-top { margin: 24px 0 0 17px; color: #fff; }
h1 { margin: 0 0 0 935px; width: 268px; font-size: 25px; font-weight: 400; letter-spacing: .2px; line-height: 65px; color: #c8c8c8; }
.bulb { margin: 15px 0 0 635px; }
.bulb + .vsep { margin-left: 24px; }
.wsname { margin-left: 26px; width: 203px; font-size: 25px; font-weight: 500; letter-spacing: .3px; line-height: 61px; color: #e4e4e4; }
.ch-ws { margin: 28px 0 0 20px; color: #e4e4e4; }
.vsep.ws2 { margin-left: 28px; }
.search { margin: 12px 0 0 10px; width: 374px; height: 42px; background: #464646; border: 2px solid #5f5f5f; border-radius: 6px; display: flex; align-items: center; padding-left: 6px; }
.search span { margin-left: 10px; font-size: 22px; letter-spacing: .4px; color: #808080; }

/* control bar */
.control { height: 68px; flex: none; background: #535353; border: 2px solid #383838; border-top: 0; display: flex; align-items: center; padding-left: 9px; }
.dotgrip { width: 4px; height: 40px; background: repeating-linear-gradient(#383838 0 2px, transparent 2px 4px); }
.nosel { margin-left: 15px; width: 177px; color: #c4c4c4; letter-spacing: .1px; }
.thin { width: 2px; height: 50px; background: #4b4b4b; }
.box { height: 42px; border: 2px solid #5f5f5f; border-radius: 6px; background: #4b4b4b; display: flex; overflow: hidden; }
.box .btn { flex: 1; display: flex; align-items: center; justify-content: center; color: #fff; border-left: 2px solid #5a5a5a; }
.sw { width: 38px; flex: none; }
.sw.white { background: #fff; border: 1px solid #e2e2e2; }
.sw.black { background: #000; border: 2px solid #e2e2e2; display: flex; align-items: center; justify-content: center; }
.sw.gray { background: #e2e2e2; }
.b-fill { margin-left: 11px; width: 78px; }
.b-stroke { margin-left: 10px; width: 78px; }
.lbl { color: #e0e0e0; }
.lbl.dim { color: #a8a8a8; }
.under { border-bottom: 2px dotted #bbb; line-height: 24px; margin-top: 6px; }
.l-stroke { margin-left: 24px; width: 68px; letter-spacing: .1px; }
.b-weight { margin-left: 11px; width: 175px; }
.step { width: 34px; flex: none; display: flex; flex-direction: column; justify-content: space-evenly; align-items: center; color: #fff; }
.field { width: 100px; background: #464646; border-left: 2px solid #5a5a5a; padding-left: 6px; line-height: 38px; color: #e8e8e8; }
.light { background: #e2e2e2; color: #000; display: flex; align-items: center; font-weight: 500; letter-spacing: .1px; }
.b-uni { margin-left: 11px; width: 217px; }
.b-uni .light { width: 178px; padding-left: 12px; }
.line { width: 70px; height: 4px; background: #000; margin-right: 8px; }
.b-brush { margin-left: 11px; width: 211px; }
.b-brush .light { width: 171px; padding-left: 13px; }
.rnd { width: 10px; height: 10px; border-radius: 50%; background: #000; margin-right: 24px; }
.l-op { margin-left: 14px; width: 79px; }
.b-op { margin-left: 12px; width: 155px; }
.b-op .field { width: 115px; border-left: 0; }
.l-style { margin-left: 9px; width: 52px; }
.b-style { margin-left: 11px; width: 78px; }
.t2 { margin-left: 11px; }
.docsetup { margin-left: 11px; width: 200px; height: 38px; border: 2px solid #777; border-radius: 6px; line-height: 34px; padding-left: 17px; color: #e8e8e8; }
.ctl-icons { margin-left: auto; margin-right: 32px; }

/* body columns */
.main { flex: none; height: 1510px; display: flex; }
.toolbar { width: 142px; flex: none; background: #535353; border-left: 2px solid #383838; }
.strip { height: 24px; background: #424242; border-bottom: 2px solid #383838; display: flex; align-items: center; padding-left: 10px; color: #c4c4c4; }
.toolbar .grip { margin: 6px 0 24px 50px; }
.tools { display: grid; grid-template-columns: 60px 60px; grid-auto-rows: 48px; padding-left: 10px; }
.tools svg { width: 60px; height: 48px; }
.tool-foot { margin-top: 2px; }

.doc { width: 2098px; flex: none; display: flex; flex-direction: column; }
.doctabs { height: 58px; flex: none; background: #424242; border-bottom: 2px solid #383838; display: flex; }
.dtab { width: 704px; border-right: 2px solid #383838; display: flex; align-items: center; padding: 1px 0 0 16px; font-size: 21px; letter-spacing: .55px; color: #aaa; }
.dtab span { margin-left: 20px; }
.dtab.on { width: 713px; background: #535353; color: #f0f0f0; font-weight: 500; letter-spacing: .33px; }
.work { display: flex; height: 1420px; background: #5f5f5f; }
.canvas { overflow: hidden; }
.vscroll { width: 32px; background: #4b4b4b; color: #999; display: flex; flex-direction: column; align-items: center; padding-top: 12px; }
.vscroll b { width: 29px; height: 48px; border-radius: 14px; background: #5f5f5f; margin-top: 665px; }
.status { height: 32px; background: #535353; display: flex; align-items: center; border-top: 2px solid #4b4b4b; }
.zoomval { width: 108px; height: 30px; line-height: 38px; padding-left: 14px; background: #424242; color: #e8e8e8; }
.sbtn { width: 34px; height: 30px; display: flex; align-items: center; justify-content: center; background: #4b4b4b; border: solid #5f5f5f; border-width: 0 2px; color: #fff; padding-top: 5px; }
.pageval { width: 84px; height: 30px; line-height: 38px; padding-left: 12px; background: #424242; color: #e8e8e8; }
.navr { margin: 0 2px 0 1px; }
.toggle { width: 402px; text-align: center; line-height: 38px; letter-spacing: .45px; color: #c8c8c8; border: solid #4b4b4b; border-width: 0 2px; height: 30px; padding-left: 3px; }
.hscroll { flex: 1; height: 30px; margin-right: 32px; background: #4b4b4b; display: flex; align-items: center; color: #999; padding: 0 12px 0 14px; }
.hscroll b { width: 50px; height: 30px; border-radius: 15px; background: #5f5f5f; margin: 0 auto 0 562px; }

/* right dock */
.dock { width: 628px; flex: none; border-right: 2px solid #383838; background: #535353; }
.dockhead { height: 24px; background: #424242; border-bottom: 2px solid #383838; display: flex; align-items: center; justify-content: space-between; padding: 0 12px 0 48px; color: #c4c4c4; }
.dockbody { display: flex; height: 1486px; }
.icons { width: 74px; flex: none; }
.grp { border-bottom: 2px solid #383838; padding: 6px 0 5px; }
.grp .grip { margin: 0 0 5px 18px; }
.grp svg { width: 74px; height: 56px; }
.panels { width: 546px; display: flex; flex-direction: column; }
.panel { flex: none; border-bottom: 2px solid #383838; margin-bottom: 2px; }
.panel + .panel { border-top: 2px solid #383838; }
.ptabs { height: 54px; background: #424242; display: flex; font-weight: 600; letter-spacing: .5px; color: #aaa; border-bottom: 2px solid #383838; }
.pt { display: flex; align-items: center; justify-content: center; border-right: 2px solid #383838; }
.pt.on { background: #535353; color: #f2f2f2; height: 54px; }
.pt.on svg { color: #aaa; margin-right: 11px; }
.bg { margin: 19px 12px 0 auto; color: #b8b8b8; }
.t1 { width: 156px; padding-right: 6px; } .t2.pt { width: 88px; margin: 0; }
.c1 { width: 132px; } .c2 { width: 104px; padding-right: 5px; } .c3 { width: 156px; }
.l1 { width: 140px; } .l2 { width: 104px; } .l3 { width: 124px; }
.transform { height: 224px; }
.tbody { display: flex; padding-left: 9px; }
.refpt { margin-top: 39px; }
.tgrid { margin: 12px 0 0 13px; width: 348px; display: grid; grid-template-columns: 40px 134px 40px 134px; grid-auto-rows: 42px; row-gap: 10px; }
.tgrid label { display: flex; align-items: center; justify-content: flex-end; padding-right: 7px; color: #929292; }
.tgrid label svg { margin-right: 2px; }
.tf { background: #5a5a5a; border-radius: 5px; line-height: 41px; padding-left: 11px; color: #6b6b6b; }
.tf.short { width: 124px; display: flex; align-items: center; justify-content: space-between; padding-right: 13px; color: #777; }
.linkbtn { width: 48px; height: 48px; margin: 34px 0 0 8px; border-radius: 5px; background: #2f2f2f; display: flex; align-items: center; justify-content: center; }
.color { height: 630px; }
.cbody { display: flex; padding: 12px 0 0 10px; height: 228px; }
.sliders { margin-left: 15px; padding-top: 4px; }
.sl { height: 50px; display: flex; align-items: flex-start; }
.sl label { width: 35px; line-height: 44px; color: #c8c8c8; }
.track { width: 226px; height: 12px; border: 2px solid #5f5f5f; border-bottom-width: 4px; margin-top: 14px; position: relative; }
.track i { position: absolute; left: -10px; top: 7px; width: 18px; height: 16px; background: #c4c4c4; clip-path: polygon(50% 0, 100% 50%, 100% 100%, 0 100%, 0 50%); }
.track.cyan { background: linear-gradient(90deg, #fff, #00bff3 70%, #00aeef) padding-box; }
.track.magenta { background: linear-gradient(90deg, #fff, #ec008c) padding-box; }
.track.yellow { background: linear-gradient(90deg, #fff, #fff200) padding-box; }
.track.key { background: linear-gradient(90deg, #fff, #231f20) padding-box; }
.sl b { width: 71px; height: 41px; margin-left: 14px; background: #464646; border: 2px solid #5f5f5f; border-radius: 6px; font-weight: 400; line-height: 35px; padding-left: 8px; color: #f2f2f2; }
.sl em { margin-left: 4px; line-height: 44px; font-size: 19px; color: #c8c8c8; letter-spacing: 0; }
.chips { display: flex; gap: 2px; width: 80px; height: 28px; padding: 2px; background: #2d2d2d; margin: 0 0 20px 10px; }
.chips i { width: 24px; height: 24px; flex: 1; }
.chips .none { background: linear-gradient(to bottom right, #fff 45%, #fc0d1b 45% 55%, #fff 55%); }
.chips .blk { background: #030707; }
.chips .wht { background: #fff; }
.spectrum { width: 500px; height: 284px; margin-left: 12px; border: 2px solid #2d2d2d; background: linear-gradient(#fff 1%, rgba(255,255,255,.74) 14%, rgba(255,255,255,.38) 30%, rgba(255,255,255,0) 50%), linear-gradient(rgba(0,0,0,0) 58%, rgba(0,0,0,.5) 77%, rgba(0,0,0,.85) 91%, #040204 99%), linear-gradient(90deg, #ed1c28 0, #ee2a27 3%, #f7922e 10%, #fcee28 16.5%, #b4d23c 23%, #6dbf45 32%, #62bd4c 40%, #50bfa8 48%, #22bdee 54%, #3a80be 59%, #34499d 67%, #60489b 75%, #b04a98 84%, #ec1490 91%, #ed1c24 98%); }

/* layers */
.layers { height: 628px; margin: 0; border-bottom: 0; }
.list { margin: 12px 0 0 11px; width: 524px; height: 521px; border: 2px solid #5f5f5f; border-radius: 5px; }
.row { height: 42px; display: flex; border-bottom: 2px solid #5f5f5f; color: #dadada; letter-spacing: .35px; position: relative; }
.row.sel { background: #53687d; }
.row.sel::after { content: ""; position: absolute; right: 0; top: 0; border: 6px solid transparent; border-top-color: #d0d0d0; border-right-color: #d0d0d0; }
.e { width: 40px; border-right: 2px solid #5f5f5f; display: flex; justify-content: center; padding-top: 11px; color: #c4c4c4; }
.lk { width: 43px; border-right: 2px solid #5f5f5f; }
.row > i { width: 10px; flex: none; border: 2px solid transparent; border-top-width: 3px; border-right-color: #5f5f5f; background: linear-gradient(#ff9524, #ff9524) padding-box; }
.row > i.green { background: linear-gradient(#4dff4d, #4dff4d) padding-box; }
.row > i.navy { background: linear-gradient(#000c8c, #000c8c) padding-box; }
.n { width: 359px; border-right: 2px solid #5f5f5f; display: flex; padding-left: 14px; line-height: 43px; }
.ar { margin: 11px 26px 0 0; color: #fff; }
.ar.dn { margin: 16px 20px 0 0; }
.th { width: 36px; height: 36px; margin: 3px 11px 0 0; border: 2px solid #000; background: #fff; }
.sub .n { padding-left: 60px; }
.tg { flex: 1; }
.tg u { display: block; width: 17px; height: 17px; border: 2px solid #c4c4c4; border-radius: 50%; margin: 12px 0 0 10px; }
.lfoot { display: flex; margin: 4px 0 0 11px; height: 30px; }
.lfoot span { width: 197px; line-height: 33px; letter-spacing: .2px; color: #cfcfcf; }
.lfoot svg { margin-top: 2px; }
.bottomedge { flex: none; height: 8px; background: #0b1220; border-top: 2px solid #18181a; }
.bottomedge i { display: block; width: 2474px; height: 6px; background: #2b2a33; border-top: 2px solid #4c4b52; border-top-right-radius: 6px; }

/* variables panel, floating */
.varpanel { position: absolute; left: 1528px; top: 978px; width: 722px; height: 638px; background: #535353; border: 2px solid #383838; border-top-width: 8px; box-shadow: 0 4px 18px rgba(0,0,0,.35); }
.vtabs { height: 54px; background: #424242; border-bottom: 2px solid #383838; display: flex; align-items: center; }
.vtabs span { width: 132px; height: 54px; line-height: 55px; background: #535353; border-right: 2px solid #383838; text-align: center; font-weight: 600; color: #f2f2f2; letter-spacing: .5px; }
.vd { margin-left: 505px; color: #c4c4c4; }
.vtabs i { width: 2px; height: 22px; background: #a0a0a0; margin: 0 14px 0 14px; }
.vb { color: #c4c4c4; }
.dset { display: flex; align-items: center; height: 34px; margin: 16px 0 8px 20px; }
.dset label { margin-left: 11px; width: 99px; color: #c8c8c8; }
.dfield { width: 453px; height: 36px; border: 2px solid #636363; border-radius: 5px; background: #464646; display: flex; }
.dfield span { flex: 1; padding-left: 12px; line-height: 33px; font-size: 21px; letter-spacing: .7px; color: #dedede; }
.dfield b { width: 34px; background: #2f2f2f; color: #fff; display: flex; align-items: center; justify-content: center; }
.arrows { margin-left: 19px; }
.vhead { margin-left: 10px; width: 698px; height: 43px; display: flex; border: 2px solid #707070; border-radius: 4px 4px 0 0; }
.vhead span { text-align: center; line-height: 41px; color: #e4e4e4; border-right: 2px solid #707070; width: 51px; }
.vhead span:nth-child(2) { width: 198px; padding-right: 2px; }
.vhead span:nth-child(3) { flex: 1; border: 0; }
.vbody { margin: -1px 0 0 10px; width: 698px; height: 420px; border: 2px solid #636363; border-radius: 0 0 5px 5px; display: flex; }
.vrows { width: 670px; overflow: hidden; }
.vrows div { height: 38px; border-bottom: 2px solid #636363; display: flex; align-items: center; }
.vrows b { width: 72px; padding-left: 14px; font: 700 25px/34px "Liberation Serif", serif; color: #c4c4c4; }
.vrows span { width: 212px; color: #cfcfcf; letter-spacing: .4px; }
.vrows em { font-size: 23.5px; letter-spacing: .75px; line-height: 36px; color: #fff; padding-top: 1px; }
.vbar { flex: 1; background: #4b4b4b; color: #999; display: flex; flex-direction: column; align-items: center; padding-top: 8px; }
.vbar b { width: 20px; height: 340px; margin: 36px 0 6px; border-radius: 10px; background: #636363; }
.vfoot { border-bottom: 2px solid #383838; height: 41px; }
.vgrip { padding: 2px 0 0 340px; }

/* data set list, dropped open over the window */
.menu { position: absolute; left: 1688px; top: 0; width: 454px; height: 1054px; background: #535353; border: 2px solid #666; border-top: 0; display: flex; overflow: hidden; box-shadow: 0 0 0 1px #444; }
.menu ul { margin: -2px 0 0; padding: 0; list-style: none; width: 428px; }
.menu li { height: 44px; line-height: 45px; padding-left: 42px; font-size: 25px; font-weight: 500; letter-spacing: 1.4px; color: #fff; position: relative; }
.menu li.cur { background: #5f5f5f; color: #55b0f5; }
.menu li svg { position: absolute; left: 8px; top: 15px; }
.mbar { flex: 1; background: #4a4a4a; color: #999; display: flex; flex-direction: column; align-items: center; padding-top: 4px; }
.mbar b { width: 19px; height: 780px; background: #5f5f5f; border-radius: 9px; margin: 236px 0 6px; flex: none; }
```
